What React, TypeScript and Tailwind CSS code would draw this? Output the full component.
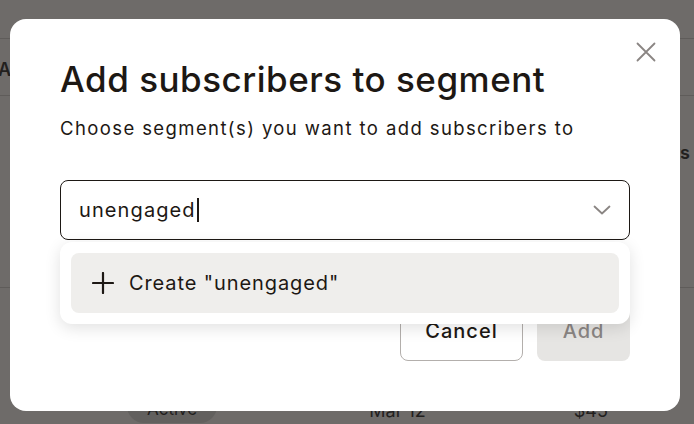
import React from 'react'

const ink = '#1d1814'

const CloseIcon = () => (
  <svg width="20" height="20" viewBox="0 0 20 20" fill="none" stroke="#8a8583" strokeWidth="1.8" strokeLinecap="round">
    <path d="M1.5 1.5l17 17M18.5 1.5l-17 17" />
  </svg>
)

const Chevron = () => (
  <svg width="18" height="10" viewBox="0 0 18 10" fill="none" stroke="#8a8583" strokeWidth="1.8" strokeLinecap="round" strokeLinejoin="round">
    <path d="M1.5 1.5L9 8.5l7.5-7" />
  </svg>
)

const PlusIcon = () => (
  <svg width="22" height="22" viewBox="0 0 22 22" fill="none" stroke={ink} strokeWidth="2.2" strokeLinecap="round">
    <path d="M11 1v20M1 11h20" />
  </svg>
)

const BackgroundPage = () => (
  <div className="flex h-full w-full flex-col bg-[#6e6b69] text-[#22201e]">
    <div className="h-[40px] border-b border-[#5f5c5a]" />
    <div className="flex h-[59px] items-center border-b border-[#5f5c5a] pt-[5px]">
      <span className="-ml-[2px] text-[18px] font-semibold">Acct</span>
    </div>
    <div className="flex h-[118px] items-center justify-end pr-[4px]">
      <span className="text-[18px] font-semibold">Segments</span>
    </div>
    <div className="h-[81px] border-b border-[#5f5c5a]" />
    <div className="h-[105px]" />
    <div className="flex items-start">
      <span className="ml-[127px] rounded-full bg-[#62605e] px-[20px] pt-[8px] text-[17px]">Active</span>
      <span className="ml-[152px] pt-[8px] text-[18px]">Mar 12</span>
      <span className="ml-[148px] pt-[8px] text-[18px]">$45</span>
    </div>
  </div>
)

export default function App() {
  return (
    <div
      className="relative h-[424px] w-[694px] overflow-hidden"
      style={{ fontFamily: 'Inter, "Noto Sans", sans-serif' }}
    >
      <BackgroundPage />

      {/* Modal */}
      <div className="absolute left-[10px] top-[19px] h-[392px] w-[670px] rounded-[16px] bg-white px-[50px] pt-[39px]">
        <button className="absolute right-[24px] top-[23px] p-0">
          <CloseIcon />
        </button>

        <h2 className="whitespace-nowrap text-[35px] font-medium leading-[42px] tracking-[0.5px]" style={{ color: ink }}>
          Add subscribers to segment
        </h2>
        <p className="mt-[14px] whitespace-nowrap text-[18.5px] leading-[28px] tracking-[1.4px]" style={{ color: ink }}>
          Choose segment(s) you want to add subscribers to
        </p>

        <div className="relative mt-[38px]">
          <div className="flex h-[60px] items-center justify-between rounded-[8px] border border-[#1d1814] pl-[18px] pr-[18px]">
            <div className="flex items-center text-[20px] tracking-[1.1px]" style={{ color: ink }}>
              <span>unengaged</span>
              <span className="ml-[1px] h-[24px] w-[2px] bg-[#1d1814]" />
            </div>
            <Chevron />
          </div>

          {/* Dropdown */}
          <div className="absolute left-0 right-0 top-[62px] z-10 rounded-[12px] bg-white p-[11px] shadow-[0_4px_16px_rgba(0,0,0,0.12)]">
            <div className="flex h-[60px] items-center gap-[15px] rounded-[8px] bg-[#efeeec] pl-[21px]">
              <PlusIcon />
              <span className="text-[20px] tracking-[0.9px]" style={{ color: ink }}>Create "unengaged"</span>
            </div>
          </div>
        </div>

        <div className="mt-[61px] flex justify-end gap-[14px]">
          <button className="h-[60px] w-[123px] rounded-[8px] border border-[#b3afac] text-[20px] font-medium tracking-[1px]" style={{ color: ink }}>
            Cancel
          </button>
          <button className="h-[60px] w-[93px] rounded-[8px] bg-[#e6e5e3] text-[20px] font-medium tracking-[1px] text-[#8a8583]">
            Add
          </button>
        </div>
      </div>
    </div>
  )
}
